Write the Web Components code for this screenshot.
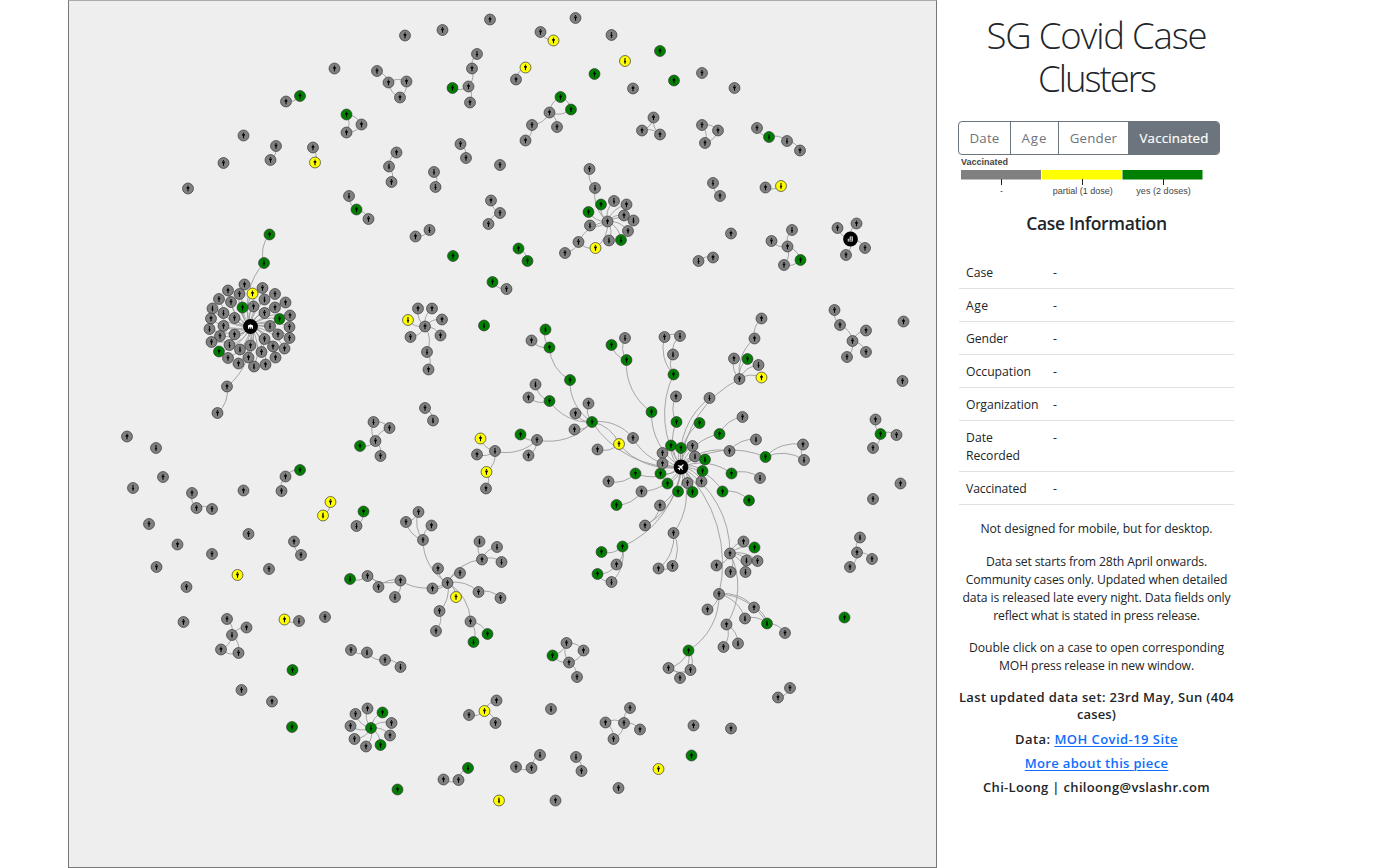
<!DOCTYPE html>
<html lang="en">
<head>
<meta charset="utf-8">
<title>SG Covid Case Clusters</title>
<style>
html,body{margin:0;height:100%;overflow:hidden;background:#fff;color:#212529;font-family:"Open Sans","Noto Sans",sans-serif}
</style>
</head>
<body>
<case-app></case-app>
<script>
const make=(host,html)=>{const r=host.attachShadow({mode:"open"});const t=document.createElement("template");t.innerHTML=html;r.append(t.content.cloneNode(true));return r};

/* A line of text whose tracking is set so that it fills a given width. */
customElements.define("fit-line",class extends HTMLElement{
  connectedCallback(){
    if(this.shadowRoot)return;
    make(this,`<style>:host{display:inline-block;white-space:nowrap}::slotted(a){color:#0d6efd;text-decoration:underline}</style><slot></slot>`);
    const w=+this.getAttribute("w");
    if(w){const n=this.textContent.length;const d=(w-this.getBoundingClientRect().width)/n;this.style.letterSpacing=d.toFixed(3)+"px";}
  }
});

customElements.define("cluster-graph",class extends HTMLElement{
  connectedCallback(){
    if(this.shadowRoot)return;
    /* Each line is a connected group: "x,y,colour ..." and its links "source-target". */
    const data=`405,35.5
442.5,30
490,19.5
575.5,18
334.5,68.5
611.5,35,f
594.5,74,g
500,165
243.5,135.5
223.5,163
188,188.5
453,256,g
484,325.5,gf
625,61,yf
660,51,g
674,80.5,g
702,73
734.5,88
633,88.5
731,233.5
903.5,321.5
902.5,381
900.5,483.5
873,499
844.5,617.5,g
127,436.5
156,448,f
163,477
133,488,f
149,524
177.5,544.5
156.5,567
212,554
248.5,534
243.5,490.5
237.5,575,y
269,569
186.5,587
183.5,622
325,617
292.5,670,g
241.5,690
272,701.5
397.5,789.5,g
499,800.5,yf
551,709,f
555.5,800.5
618.5,788
658.5,769,y
292,727,g
691.5,755.5,g
693.5,725.5
731,728.5
377,71 388.5,82.5 406.5,81.5 400,97.5|0-1 1-2 3-1 2-3
477,54,f 472,68.5 468.5,86.5 452.5,88,g 470,102.5|1-0 1-2 2-3 2-4
540.5,32 553.5,40.5,y|1-0
525.5,67.5,y 516,79.5|1-0
346.5,114.5,g 361.5,124.5 346.5,132.5|0-1 1-2 0-2
560.5,97,g 571,109.5,g 549.5,112.5 557,127 532,125 525.5,140.5|2-0 0-1 1-2 2-3 2-4 4-5
396.5,152.5 389,166.5,f 391.5,182|1-0 1-2
434,172,f 435.5,187,f|0-1
460.5,144 466,158|0-1
349,196,f 356.5,209.5,g 368.5,219|1-0 1-2
491,200.5 500,213 488.5,224|1-0 2-1
300,96,g 286,101.5|0-1
276,146 270.5,160|0-1
313,147.5 315,162.5,y|0-1
429.5,230,f 415.5,236.5|0-1
518.5,248.5,g 527.5,261,g|0-1
492.5,282,g 506.5,289|1-0
653.5,117.5 642,130.5 660,134.5|1-2 0-1 2-0
702,125 718,130.5 705,143|0-1 1-2 0-2
757,128 769,137,gf 787,141,f 800,150.5|1-0 1-2 2-3
713,183,f 720,196|1-0
765.5,187.5 781,186,yf|1-0
713,257.5 698.5,261,f|1-0
792,230,f 787.5,246.5 771.5,241 784,265 800.5,260,g|1-0 1-2 1-3 1-4 4-3
850.5,239,b 837.5,228 856.5,223.5 865,248 846,255|0-1 0-2 0-3 0-4
607.5,221.5 595,188,f 589.5,169 601,204.5,g 588.5,212,g 614,201,f 626.5,204.5 624,215.5 633.5,220.5,f 628,231 621,240,gf 609,240.5,f 590,225.5,f 578.5,242 565,253 595.5,248,y|0-1 1-2 0-3 0-4 0-5 0-6 0-7 0-8 0-9 0-10 0-11 0-12 13-0 0-15 13-14 15-13
425,326.5 408,320,yf 418,308.5 432,308.5 442,319.5 440.5,335.5 410.5,337 427,352,f 428.5,369.5|0-1 0-2 0-3 0-4 0-5 0-6 0-7 7-8
250.5,326.5,h 244.5,284.5 262.5,288 228,290.5 239.5,294 252.5,293.5,y 275,294 219,299 231,302 264.5,299.5,f 285.5,302.5 242.5,307.5,g 253.5,306.5 275,307.5 212.5,308.5,f 223.5,313,f 234.5,318 264.5,313 279.5,319,g 290,315.5 211,318.5 223.5,326 270,326,f 289.5,327 209.5,329,f 234.5,334.5 220,336 278,334.5 289.5,338 264.5,339 211.5,342 229.5,345,f 250.5,345.5 219,351.5,g 240,349.5,f 273,346.5 284.5,348.5 261.5,352 228,358 248.5,357.5 275.5,357.5 238.5,363.5 254,366.5,f 265.5,364.5 264,263,gf 269.5,234.5,g 227,386.5 217.5,413|* 44-45 46-47
425,408 433,420.5,f|0-1
373.5,422,f 375.5,441 360,446,g 389.5,428 380.5,456|1-0 1-2 0-3 1-3 1-4
834.5,310 840,325 866,330.5 852.5,341 866,352 847,357|1-0 1-3 3-2 3-4 3-5
875.5,419.5 880.5,434,g 896.5,435 873,448|1-0 1-2 1-3
860,537.5,f 857,552.5 872,559 850,567|1-0 1-2 1-3
192,493 196.5,508 212,509|1-0 1-2
300,470,g 285.5,476.5 281.5,491|1-0 2-1
330.5,502,y 323,515.5,yf|0-1
363.5,511.5,g 356.5,526,f|0-1
294,541.5 301,555|1-0
284.5,619.5,y 299,621,f|1-0
227,619 246.5,627.5 232,635,f 221,649.5 238.5,653|0-2 2-1 2-3 2-4 4-3
351,650 367,652.5,f 385,660 400.5,667,f|1-0 2-1 2-3
552.5,655.5,g 566.5,643 583.5,650.5 569,662.5 577,677|1-0 1-2 3-0 3-1 2-3 3-4
371,728,gf 355.5,714 367.5,708.5 382.5,712.5,g 391.5,723 390,735.5 380.5,745,g 366,746.5 354.5,739 350.5,726|*
468,768,gf 458.5,780 443.5,779.5|1-0 1-2
484.5,711,y 496.5,700.5 469,715 495.5,723|0-1 0-2 0-3
540,755,f 531.5,768 516,767|1-0 1-2
576,757,f 581.5,771|0-1
624,723 605.5,722.5 630,708 640,729.5 613.5,739|0-2 0-3 0-4 1-0 1-4
790,688 778,697.5|0-1
447.5,583 438,568.5 460,573 432.5,588.5 456,597,y 439.5,611 436,631 423,540 406,522 418.5,512 431.5,525.5 482,559.5 479.5,541.5,f 497,547,f 501.5,562,f 478.5,592 500.5,598 470.5,621.5 473.5,642,gf 487.5,634,g 400.5,580.5 367.5,576 378.5,587 395,597,f 350,579,gf|0-1 0-2 0-3 0-4 0-5 5-6 0-7 7-8 7-9 7-10 9-8 0-11 11-12 11-13 11-14 0-15 15-16 0-17 17-18 17-19 0-20 22-20 20-21 20-23 21-24 21-22
681,467,a 592,422,g 588.5,403.5 575.5,413.5 574.5,429.5 570,380,g 549.5,401,g 537,440 549.5,347.5,g 545.5,329.5,gf 531.5,340.5 535.5,384.5,f 528.5,397.5 520.5,434.5,g 528.5,455.5 495,451,f 480.5,438.5,y 477,454.5 486.5,472,y 486,488.5 619,444,y 633,438 597.5,449.5 635.5,473.5,g 608.5,481.5 660.5,473.5,g 667.5,483.5,g 641.5,491.5 616.5,505,g 660,505.5 645,525.5 662.5,453 662.5,463.5 671,445.5,g 681,448,g 692.5,446 695,456.5,f 705,459.5,gf 702.5,471,g 701.5,481.5 687.5,483 678,491.5,g 692.5,492,g 731.5,473.5,g 760,478,f 722.5,491.5,g 749,500.5,g 729.5,451 756,439.5,f 765.5,457,g 803,444.5 804,460,f 719.5,434,g 742.5,417 699.5,423,g 709.5,398,f 739.5,379 734,358.5 747.5,359,g 758.5,365,f 761.5,377.5,y 754.5,338.5 761.5,318.5 676.5,422,g 676,396.5 673.5,374.5,g 673,354.5,f 664.5,337 680,336,f 651.5,412,g 626.5,360,g 611.5,345,g 625,338,f 622.5,546.5,g 601.5,552,g 616.5,564.5 611.5,582,f 597.5,574,g 673.5,533 658.5,568.5 672.5,566 730,553.5 719,594 743.5,541.5 754.5,547.5,g 716.5,565.5 730.5,572 745.5,572,f 746.5,560.5,f 757.5,561 726.5,624.5 738,643.5,f 723.5,647 707.5,609.5 754,607.5 745,618.5,f 767,623.5,gf 785,633 688.5,650.5,g 668.5,668 680,678 690.5,670|0-1 1-2 1-3 1-4 1-5 1-6 1-7 5-8 8-9 8-10 6-11 6-12 7-13 7-14 7-15 15-16 15-17 15-18 18-19 1-20 1-21 0-20 0-21 20-22 0-23 23-24 0-25 0-26 0-27 27-28 0-29 29-30 0-30 0-31 0-32 0-33 0-34 0-35 0-36 0-37 0-38 0-39 0-40 0-41 0-42 0-43 43-44 0-45 45-46 0-47 47-48 0-49 49-50 49-51 51-50 0-52 52-53 0-54 0-55 0-56 56-57 56-58 56-59 56-60 56-61 61-62 0-63 63-64 0-65 65-66 65-67 66-68 67-68 0-69 69-70 70-71 70-72 0-73 73-74 73-75 73-76 75-77 76-77 0-78 80-79 78-79 78-80 0-81 0-82 81-83 81-84 81-85 81-86 81-87 81-88 81-89 81-90 90-91 90-92 82-93 82-94 82-95 82-96 94-96 95-96 96-97 82-98 98-99 98-100 98-101 99-100 101-99|`;
    const fill={g:"#008000",y:"#ffff00"};
    let links="",nodes="";
    for(const line of data.split("\n")){
      const [ns,ls]=line.trim().split("|");
      const p=ns.split(" ").map(s=>{const [x,y,k=""]=s.split(",");return{x:+x,y:+y,k}});
      let pairs=[];
      for(const l of (ls||"").split(" ")){
        if(l==="*"){for(let i=1;i<p.length;i++)if(!(p.length>40&&(i===45||i===47)))pairs.push([0,i])}
        else if(l)pairs.push(l.split("-").map(Number));
      }
      for(const [a,b] of pairs){const r=Math.hypot(p[a].x-p[b].x,p[a].y-p[b].y).toFixed(1);
        links+=`<path d="M${p[a].x} ${p[a].y}A${r} ${r} 0 0 1 ${p[b].x} ${p[b].y}"/>`}
      for(const n of p){
        const t=`<g transform="translate(${n.x} ${n.y})">`;
        if("bha".includes(n.k)&&n.k){
          const ic={h:`<path fill="#fff" d="M-2.5 2.2V-1L0-2.2 2.5-1V2.2H1.2V.8H.4V2.2H-.4V.8H-1.2V2.2Z"/>`,b:`<path fill="#ccc" d="M-2.8 2.5V-.2H-.8V-2.6H2.5V2.5Z"/><path stroke="#000" stroke-width=".4" d="M-.8 0V2.5M1-2V2M-2 1.2H2M0-.8H2"/>`,a:`<g transform="rotate(45) scale(.82)"><path fill="#fff" d="M0-4.3C.8-4.3.8-3 .8-1.2L4 .8V1.8L.8 1V2.6L1.7 3.5V4.2L0 3.7-1.7 4.2V3.5L-.8 2.6V1L-4 1.8V.8L-.8-1.2C-.8-3-.8-4.3 0-4.3Z"/></g>`}[n.k];
          nodes+=t+`<circle r="7.4" fill="#000"/>${ic}</g>`;
        }else{
          const f=n.k.includes("f");
          nodes+=t+`<circle r="5.45" fill="${fill[n.k[0]]||"#808080"}" stroke="#333" stroke-width=".7"/><use href="#${f?"f":"m"}"/></g>`;
        }
      }
    }
    make(this,`<style>:host{display:block;box-sizing:border-box;width:869px;height:868px;border:1px solid #777;border-top-color:#aaa;background:#eee;overflow:hidden}svg{display:block}</style>
<svg width="867" height="866" viewBox="69 1 867 866"><defs>
<g id="m"><circle cy="-2.3" r=".65"/><path d="M-1.3-1.4H1.3V.2H.55V2.7H-.55V.2H-1.3Z"/></g>
<g id="f"><circle cy="-2.3" r=".7"/><path d="M-.9-1.4H.7L.5-.3 1.4 1H.6V2.8H-.6V1H-1.3L-.5-.3Z"/></g>
</defs><g fill="none" stroke="#999" stroke-opacity=".85" stroke-width="1">${links}</g><g>${nodes}</g></svg>`);
  }
});

customElements.define("button-group",class extends HTMLElement{
  connectedCallback(){
    if(this.shadowRoot)return;
    make(this,`<style>:host{display:flex;box-sizing:border-box;width:262px;height:34px;margin-left:-1px;border:1px solid #6c757d;border-radius:4px;overflow:hidden}
::slotted(button){all:unset;box-sizing:border-box;flex:none;text-align:center;color:#6c757d;font-size:13.3px;line-height:32px;border-right:1px solid #6c757d!important}
::slotted(button.on){background:#6c757d;color:#fff;-webkit-text-stroke:.2px #fff}
::slotted(button:last-child){border-right:0!important;flex:1}</style><slot></slot>`);
  }
});

customElements.define("colour-legend",class extends HTMLElement{
  connectedCallback(){
    if(this.shadowRoot)return;
    make(this,`<style>:host{display:block;height:45px}svg{display:block}text{font:9px "Liberation Sans",Arial,sans-serif;fill:#444}</style>
<svg width="260" height="45" viewBox="959 155 260 45">
<text x="961" y="165" style="font-weight:bold" textLength="47">Vaccinated</text>
<path fill="#808080" d="M961 170h80v9.5h-80z"/><path fill="#ff0" d="M1041.7 170h80v9.5h-80z"/><path fill="#008000" d="M1122.5 170h80v9.5h-80z"/>
<path stroke="#222" d="M1001.5 179v6M1082.5 179v6M1163.5 179v6"/>
<text x="1001.5" y="194" text-anchor="middle">-</text><text x="1052.7" y="194" textLength="60">partial (1 dose)</text><text x="1136.3" y="194" textLength="54.5">yes (2 doses)</text></svg>`);
  }
});

customElements.define("info-row",class extends HTMLElement{
  connectedCallback(){
    if(this.shadowRoot)return;
    make(this,`<style>:host{display:flex;box-sizing:border-box;border-bottom:1px solid #dee2e6;padding:8px 7px 6px;font-size:12.2px;line-height:18px}
.k{width:87px}</style><div class="k"><slot></slot></div><div>-</div>`);
  }
});

customElements.define("info-panel",class extends HTMLElement{
  connectedCallback(){
    if(this.shadowRoot)return;
    make(this,`<style>
:host{display:block;width:275px;text-align:center}
h1{margin:14px -10px 0;height:107px;font-weight:300;font-size:36.5px;line-height:43px}
h2{margin:12px 0 22px;font-size:17.5px;line-height:22px;font-weight:600}
.rows{text-align:left}
p{margin:0 -10px 14px;font-size:12.2px;line-height:18px}
p.first{margin-top:15px;margin-bottom:15px}
h3{margin:0 -10px 7px;font-size:13px;line-height:17px;font-weight:600}
h3.last{margin-bottom:8px}
a{color:#0d6efd;text-decoration:underline;text-underline-offset:1.5px;text-decoration-thickness:1px}
</style>
<h1><fit-line w="220">SG Covid Case</fit-line><br><fit-line w="117">Clusters</fit-line></h1>
<button-group><button style="width:52px"><fit-line w="30">Date</fit-line></button><button style="width:48px"><fit-line w="26">Age</fit-line></button><button style="width:70px"><fit-line w="47.5">Gender</fit-line></button><button class="on"><fit-line w="69">Vaccinated</fit-line></button></button-group>
<colour-legend></colour-legend>
<h2><fit-line w="140.5">Case Information</fit-line></h2>
<div class="rows">
<info-row><fit-line w="27">Case</fit-line></info-row>
<info-row><fit-line w="22.5">Age</fit-line></info-row>
<info-row><fit-line w="42">Gender</fit-line></info-row>
<info-row><fit-line w="65">Occupation</fit-line></info-row>
<info-row><fit-line w="72.5">Organization</fit-line></info-row>
<info-row><fit-line w="27">Date</fit-line><br><fit-line w="54">Recorded</fit-line></info-row>
<info-row><fit-line w="60.5">Vaccinated</fit-line></info-row>
</div>
<p class="first"><fit-line w="232">Not designed for mobile, but for desktop.</fit-line></p>
<p><fit-line w="221">Data set starts from 28th April onwards.</fit-line><br><fit-line w="261.5">Community cases only. Updated when detailed</fit-line><br><fit-line w="268">data is released late every night. Data fields only</fit-line><br><fit-line w="206.5">reflect what is stated in press release.</fit-line></p>
<p><fit-line w="255">Double click on a case to open corresponding</fit-line><br><fit-line w="195">MOH press release in new window.</fit-line></p>
<h3 class="last"><fit-line w="275">Last updated data set: 23rd May, Sun (404</fit-line><br><fit-line w="39">cases)</fit-line></h3>
<h3><fit-line w="163">Data: <a>MOH Covid-19 Site</a></fit-line></h3>
<h3><fit-line w="143.5"><a>More about this piece</a></fit-line></h3>
<h3><fit-line w="227">Chi-Loong | chiloong@vslashr.com</fit-line></h3>`);
  }
});

customElements.define("case-app",class extends HTMLElement{
  connectedCallback(){
    if(this.shadowRoot)return;
    make(this,`<style>:host{display:flex;gap:22px;box-sizing:border-box;height:868px;padding-left:68px;align-items:flex-start}cluster-graph,info-panel{flex:none}</style><cluster-graph></cluster-graph><info-panel></info-panel>`);
  }
});
</script>
</body>
</html>
